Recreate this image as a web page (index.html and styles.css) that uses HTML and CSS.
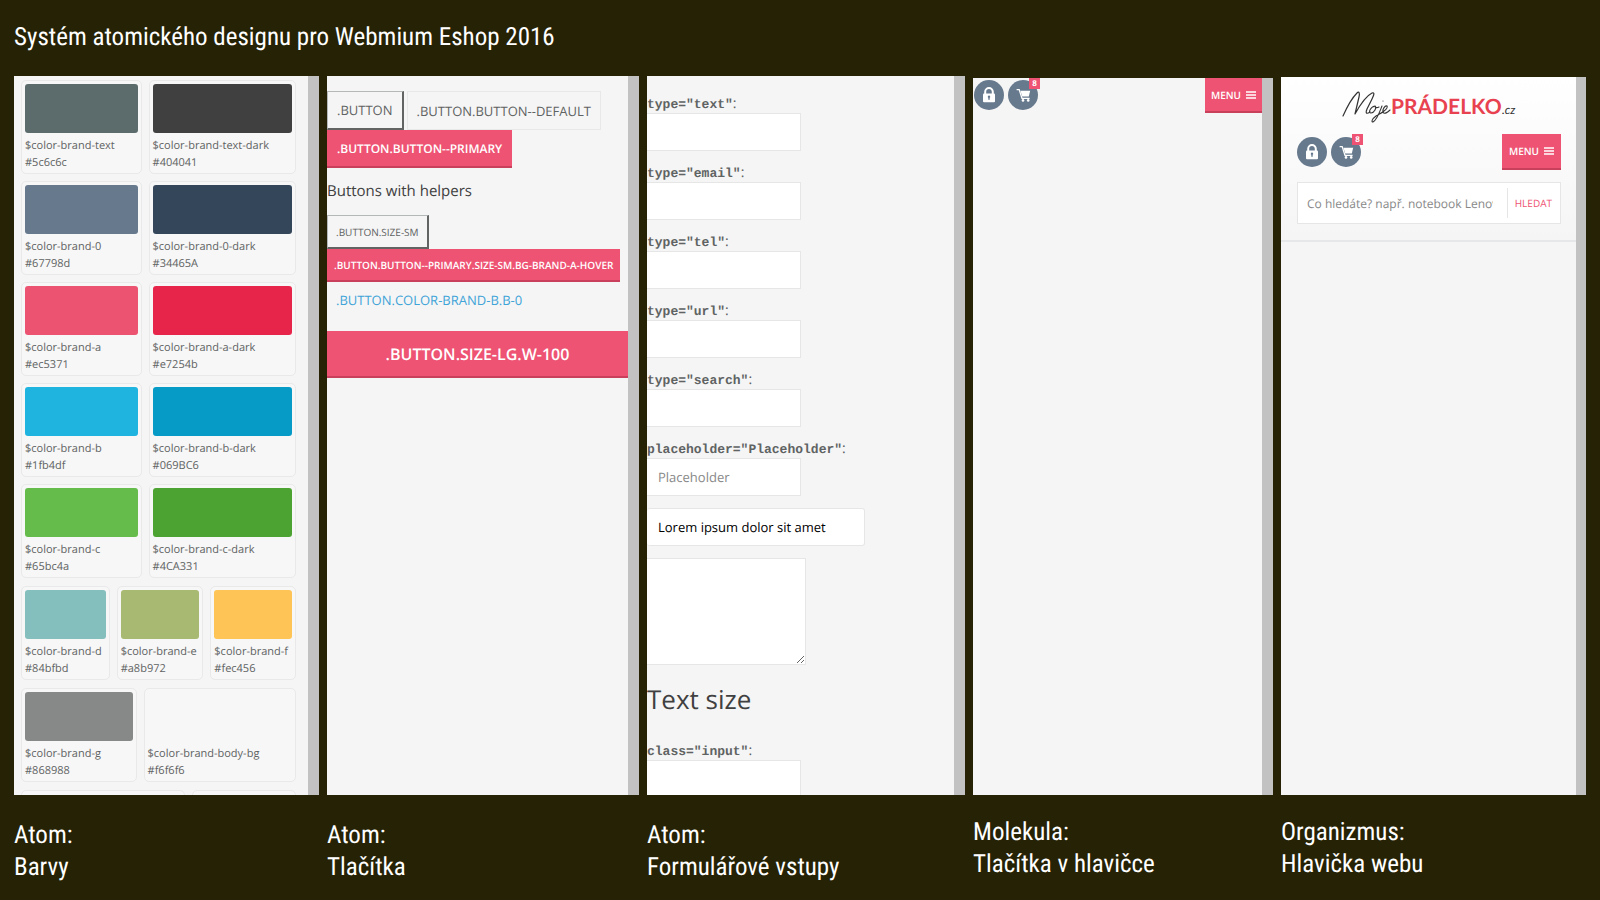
FILE: index.html
```
<!DOCTYPE html>
<html lang="cs">
<head>
<meta charset="utf-8">
<title>Systém atomického designu pro Webmium Eshop 2016</title>
<link rel="stylesheet" href="styles.css">
</head>
<body>
<svg class="sprite" aria-hidden="true">
  <symbol id="icon-lock" viewBox="0 0 30 30">
    <path d="M11.2 14v-2.2a3.8 3.8 0 0 1 7.6 0V14" fill="none" stroke="#fff" stroke-width="2"/>
    <rect x="9" y="13.4" width="12" height="8.8" rx="1" fill="#fff"/>
    <path d="M15 15.6a1.2 1.2 0 0 1 .7 2.2v2h-1.4v-2a1.2 1.2 0 0 1 .7-2.2z" fill="#67798d"/>
  </symbol>
  <symbol id="icon-cart" viewBox="0 0 30 30">
    <path d="M8.6 9.6h2.6l2.8 8.8h7.6" fill="none" stroke="#fff" stroke-width="1.3"/>
    <path d="M12.4 10.8h9.8l-1.4 5.6h-6.6z" fill="#fff"/>
    <circle cx="15" cy="20.4" r="1.3" fill="#fff"/>
    <circle cx="20.2" cy="20.4" r="1.3" fill="#fff"/>
  </symbol>
  <symbol id="icon-menu" viewBox="0 0 10 8">
    <path d="M0 1h10M0 4h10M0 7h10" stroke="#fff" stroke-width="1.3"/>
  </symbol>
</svg>

<header class="title">
  <h1>Systém atomického designu pro Webmium Eshop 2016</h1>
</header>

<main class="columns">

  <figure class="column">
    <div class="panel panel--colors">
      <div class="swatches swatches--half">
        <div class="swatch"><div class="swatch-color text"></div>$color-brand-text<br>#5c6c6c</div>
        <div class="swatch"><div class="swatch-color text-dark"></div>$color-brand-text-dark<br>#404041</div>
        <div class="swatch"><div class="swatch-color brand-0"></div>$color-brand-0<br>#67798d</div>
        <div class="swatch"><div class="swatch-color brand-0-dark"></div>$color-brand-0-dark<br>#34465A</div>
        <div class="swatch"><div class="swatch-color brand-a"></div>$color-brand-a<br>#ec5371</div>
        <div class="swatch"><div class="swatch-color brand-a-dark"></div>$color-brand-a-dark<br>#e7254b</div>
        <div class="swatch"><div class="swatch-color brand-b"></div>$color-brand-b<br>#1fb4df</div>
        <div class="swatch"><div class="swatch-color brand-b-dark"></div>$color-brand-b-dark<br>#069BC6</div>
        <div class="swatch"><div class="swatch-color brand-c"></div>$color-brand-c<br>#65bc4a</div>
        <div class="swatch"><div class="swatch-color brand-c-dark"></div>$color-brand-c-dark<br>#4CA331</div>
      </div>
      <div class="swatches swatches--third">
        <div class="swatch"><div class="swatch-color brand-d"></div>$color-brand-d<br>#84bfbd</div>
        <div class="swatch"><div class="swatch-color brand-e"></div>$color-brand-e<br>#a8b972</div>
        <div class="swatch"><div class="swatch-color brand-f"></div>$color-brand-f<br>#fec456</div>
      </div>
      <div class="swatches swatches--gray">
        <div class="swatch"><div class="swatch-color brand-g"></div>$color-brand-g<br>#868988</div>
        <div class="swatch"><div class="swatch-color"></div>$color-brand-body-bg<br>#f6f6f6</div>
      </div>
      <div class="swatches swatches--last">
        <div class="swatch"><div class="swatch-color"></div></div>
        <div class="swatch"><div class="swatch-color"></div></div>
      </div>
    </div>
    <figcaption>Atom:<br>Barvy</figcaption>
  </figure>

  <figure class="column">
    <div class="panel panel--buttons">
      <div class="button-row">
        <button class="button">.button</button>
        <button class="button button--default">.button.button--default</button>
        <button class="button button--primary">.button.button--primary</button>
      </div>
      <h2>Buttons with helpers</h2>
      <div class="button-row">
        <button class="button size-sm">.button.size-sm</button>
        <button class="button button--primary size-sm">.button.button--primary.size-sm.bg-brand-a-hover</button>
        <button class="button color-brand-b b-0">.button.color-brand-b.b-0</button>
      </div>
      <button class="button button--primary size-lg w-100">.button.size-lg.w-100</button>
    </div>
    <figcaption>Atom:<br>Tlačítka</figcaption>
  </figure>

  <figure class="column">
    <div class="panel panel--inputs">
      <label for="in-text"><code>type="text"</code>:</label>
      <input class="input" id="in-text" type="text">
      <label for="in-email"><code>type="email"</code>:</label>
      <input class="input" id="in-email" type="email">
      <label for="in-tel"><code>type="tel"</code>:</label>
      <input class="input" id="in-tel" type="tel">
      <label for="in-url"><code>type="url"</code>:</label>
      <input class="input" id="in-url" type="url">
      <label for="in-search"><code>type="search"</code>:</label>
      <input class="input" id="in-search" type="search">
      <label for="in-placeholder"><code>placeholder="Placeholder"</code>:</label>
      <input class="input" id="in-placeholder" type="text" placeholder="Placeholder">
      <select class="input select" aria-label="Select">
        <option>Lorem ipsum dolor sit amet</option>
      </select>
      <textarea class="input textarea" aria-label="Textarea"></textarea>
      <h3>Text size</h3>
      <label for="in-size"><code>class="input"</code>:</label>
      <input class="input" id="in-size" type="text">
    </div>
    <figcaption>Atom:<br>Formulářové vstupy</figcaption>
  </figure>

  <figure class="column column--molecule">
    <div class="panel">
      <div class="toolbar">
        <a class="circle" href="#" aria-label="Přihlášení"><svg><use href="#icon-lock"/></svg></a>
        <a class="circle" href="#" aria-label="Košík"><svg><use href="#icon-cart"/></svg><span class="badge">8</span></a>
        <button class="menu">Menu <svg><use href="#icon-menu"/></svg></button>
      </div>
    </div>
    <figcaption>Molekula:<br>Tlačítka v hlavičce</figcaption>
  </figure>

  <figure class="column column--organism">
    <div class="panel">
      <div class="site-header">
        <a class="logo" href="#">
          <svg viewBox="0 0 176 36" role="img" aria-label="Moje Prádelko.cz">
            <g fill="none" stroke="#333" stroke-linecap="round" stroke-linejoin="round">
              <path stroke-width="1.2" d="M2 26C6 17 12 7 16 3c2-2 3 0 2 4l-4 17C19 15 25 6 31 3c3-1 2 2 0 6l-5 10c-2 5 0 5 3 3"/>
              <path stroke-width="1.1" d="M34 16c-5 1-7 7-4 7s6-5 4-7c0 2 2 2 4 1M41 16c-2 5-5 14-9 16-2 0-1-3 3-6 3-2 6-3 8-5 2-1 4-4 3-5-2-1-5 4-4 6 1 3 5 0 7-2M42 11v0"/>
            </g>
            <text class="logo-name" x="50" y="24">PRÁDELKO</text>
            <text class="logo-tld" x="161" y="24">.cz</text>
          </svg>
        </a>
        <div class="toolbar">
          <a class="circle" href="#" aria-label="Přihlášení"><svg><use href="#icon-lock"/></svg></a>
          <a class="circle" href="#" aria-label="Košík"><svg><use href="#icon-cart"/></svg><span class="badge">8</span></a>
          <button class="menu">Menu <svg><use href="#icon-menu"/></svg></button>
        </div>
        <form class="search">
          <input type="text" aria-label="Hledat" placeholder="Co hledáte? např. notebook Lenovo">
          <button type="button">Hledat</button>
        </form>
      </div>
    </div>
    <figcaption>Organizmus:<br>Hlavička webu</figcaption>
  </figure>

</main>
</body>
</html>
```
FILE: styles.css
```
* { box-sizing: border-box; }
body {
  margin: 0;
  height: 100vh;
  display: flex;
  flex-direction: column;
  background: #262206;
  color: #5c6c6c;
  font: 14px/20px "Open Sans", "Noto Sans", sans-serif;
  text-rendering: geometricPrecision;
}
button, input, select, textarea { font-family: inherit; text-rendering: inherit; margin: 0; }
.sprite { display: none; }

/* page frame */
.title { padding: 22px 14px; }
.title h1, figcaption {
  margin: 0;
  color: #fff;
  font: 400 25px/32px "Roboto Condensed", Roboto, sans-serif;
}
.columns {
  flex: 1;
  min-height: 0;
  display: grid;
  grid-template-columns: 305fr 312fr 318fr 300fr 305fr;
  grid-template-rows: 100%;
  gap: 8px;
  padding: 0 14px;
}
.column {
  margin: 0;
  min-width: 0;
  display: flex;
  flex-direction: column;
}
.column--molecule { padding-top: 2px; }
.column--organism { padding-top: 1px; }
.panel {
  flex: 1;
  min-height: 0;
  overflow: hidden;
  background: #f5f5f5;
  border-right: 11px solid #c2c2c2;
}
.column--organism .panel { border-right-width: 10px; }
figcaption { padding: 25px 0 16px; white-space: nowrap; }
.column--molecule figcaption, .column--organism figcaption { padding: 22px 0 19px; }

/* colors */
.panel--colors { padding: 4px 12px 0 7px; }
.swatches { display: grid; gap: 7px; margin-bottom: 8px; }
.swatches--half { grid-template-columns: 121fr 148fr; }
.swatches--third { grid-template-columns: 89fr 87fr 86fr; }
.swatches--gray { grid-template-columns: 116fr 153fr; }
.swatches--last { grid-template-columns: 165fr 104fr; }
.swatch {
  min-width: 0;
  height: 94px;
  padding: 3px;
  border: 1px solid #e9e9e9;
  border-radius: 5px;
  background: #f7f7f7;
  color: #5f6363;
  font-size: 11px;
  line-height: 17px;
  white-space: nowrap;
}
.swatch-color { height: 49px; margin-bottom: 4px; border-radius: 3px; }
.text { background: #5c6c6c; }
.text-dark { background: #404041; }
.brand-0 { background: #67798d; }
.brand-0-dark { background: #34465a; }
.brand-a { background: #ec5371; }
.brand-a-dark { background: #e7254b; }
.brand-b { background: #1fb4df; }
.brand-b-dark { background: #069bc6; }
.brand-c { background: #65bc4a; }
.brand-c-dark { background: #4ca331; }
.brand-d { background: #84bfbd; }
.brand-e { background: #a8b972; }
.brand-f { background: #fec456; }
.brand-g { background: #868988; }

/* buttons */
.panel--buttons { padding-top: 15px; }
.button-row { display: flex; flex-wrap: wrap; column-gap: 3px; }
.button {
  height: 39px;
  padding: 0 9px;
  border: 2px outset #b5b8b8;
  border-width: 1px 2px 2px 1px;
  background: #f5f5f5;
  color: #5f6363;
  font-size: 13px;
  text-transform: uppercase;
  white-space: nowrap;
}
.button--default { border: 1px solid #e8e8e8; }
.button--primary {
  height: 38px;
  padding: 0 10px;
  border: 0;
  border-bottom: 2px solid #c8405c;
  background: #ee5373;
  color: #fff;
  font-size: 12px;
  font-weight: 600;
}
.size-sm { height: 34px; padding: 0 8px; font-size: 10px; }
.button--primary.size-sm { height: 33px; padding: 0 7px; }
.size-lg { height: 47px; font-size: 16px; }
.w-100 { width: 100%; }
.color-brand-b { color: #3fa4d8; }
.b-0 { height: 36px; border: 0; }
.panel--buttons h2 {
  margin: 12px 0 13px;
  color: #404041;
  font-size: 15px;
  font-weight: 400;
  line-height: 22px;
}
.panel--buttons > .size-lg { margin-top: 13px; }

/* form inputs */
.panel--inputs { padding-top: 19px; }
.panel--inputs label { display: block; line-height: 18px; color: #5f6363; }
.panel--inputs code { font: bold 13px "Liberation Mono", monospace; }
.input {
  display: block;
  width: 154px;
  height: 38px;
  margin-bottom: 13px;
  padding: 0 11px;
  border: 1px solid #e6e6e6;
  border-left: 0;
  background: #fff;
  color: #000;
  font-size: 13px;
}
.input::placeholder, .search input::placeholder { color: #888; opacity: 1; }
.select { width: 218px; appearance: none; border-radius: 3px; margin: -1px 0 12px; }
.textarea { width: 159px; height: 107px; }
.panel--inputs h3 {
  margin: 16px 0 25px;
  color: #404041;
  font-size: 26px;
  font-weight: 400;
  line-height: 36px;
}

/* header buttons */
.toolbar { display: flex; align-items: flex-start; gap: 4px; padding-left: 1px; }
.circle {
  position: relative;
  width: 30px;
  height: 30px;
  margin-top: 2px;
  border-radius: 50%;
  background: #67798d;
}
.circle svg { display: block; width: 30px; height: 30px; }
.badge {
  position: absolute;
  top: -2px;
  right: -2px;
  width: 11px;
  background: #ee5373;
  color: #fff;
  font-size: 8px;
  font-weight: 700;
  line-height: 11px;
  text-align: center;
}
.menu {
  display: flex;
  align-items: center;
  gap: 5px;
  height: 35px;
  margin-left: auto;
  padding: 0 6px;
  border: 0;
  border-bottom: 2px solid #c8405c;
  background: #ee5373;
  color: #fff;
  font-size: 10px;
  font-weight: 600;
  text-transform: uppercase;
}
.menu svg { width: 10px; height: 8px; }

/* site header */
.site-header {
  padding: 13px 15px 16px 16px;
  border-bottom: 2px solid #e6e7e8;
  background: linear-gradient(#fff, #f5f5f5);
}
.site-header .toolbar { padding: 0; }
.site-header .circle { margin-top: 3px; }
.site-header .badge { top: -3px; }
.site-header .menu { height: 36px; padding: 0 7px; }
.logo { display: block; margin-bottom: 8px; text-align: center; }
.logo svg { display: block; width: 176px; height: 36px; margin: 0 auto; }
.logo-name { fill: #e8414f; font: 700 21px Lato, sans-serif; }
.logo-tld { fill: #333; font: italic 12px Lato, sans-serif; }
.search {
  display: flex;
  align-items: center;
  height: 42px;
  margin-top: 12px;
  border: 1px solid #e6e6e6;
  background: #fff;
}
.search input {
  flex: 1;
  min-width: 0;
  padding: 0 0 0 9px;
  border: 0;
  background: none;
  font-size: 12px;
}
.search button {
  height: 30px;
  margin-left: 14px;
  padding: 0 8px 0 7px;
  border: 0;
  border-left: 1px solid #e6e6e6;
  background: none;
  color: #ee5373;
  font-size: 10px;
  text-transform: uppercase;
}
```
